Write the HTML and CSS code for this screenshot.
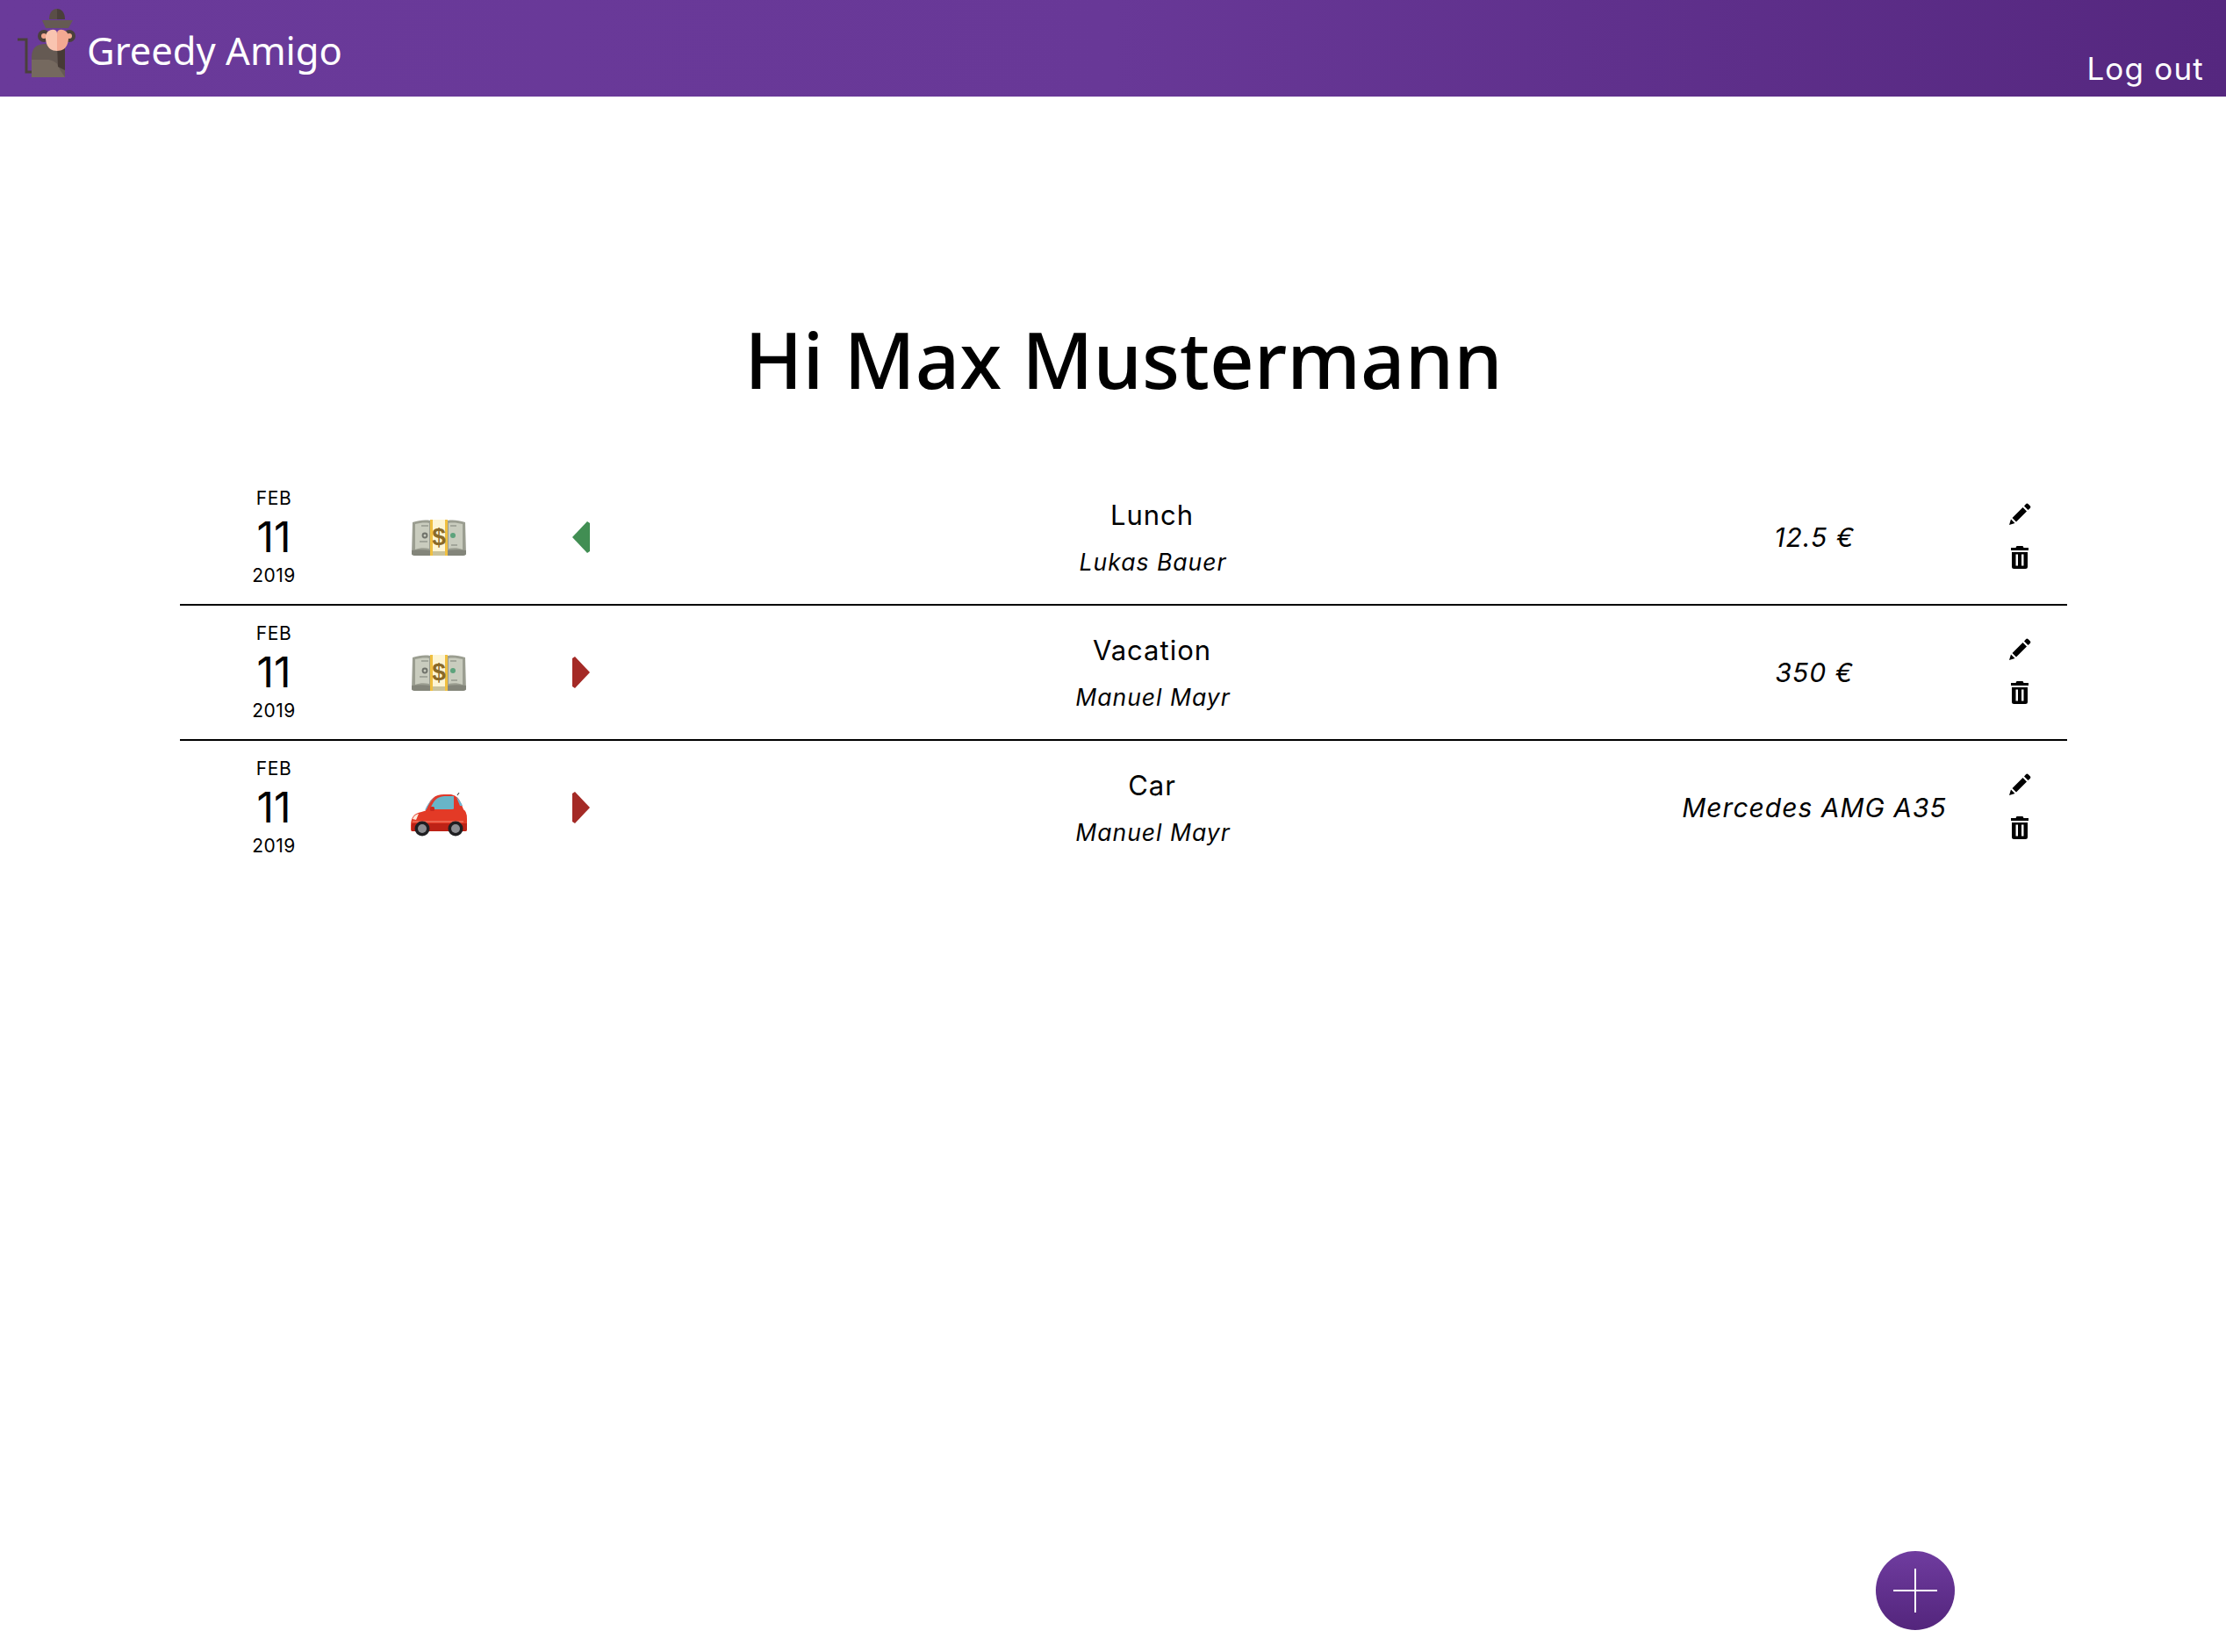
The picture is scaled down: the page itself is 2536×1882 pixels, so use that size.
FILE: index.html
```html
<!DOCTYPE html>
<html lang="en">
<head>
    <meta charset="UTF-8">
    <meta name="viewport" content="width=device-width, initial-scale=1.0">
    <title>Greedy Amigo</title>
    <link rel="stylesheet" href="styles.css">
</head>
<body>
    <svg class="icon-defs" aria-hidden="true">
        <symbol id="icon-money" viewBox="0 0 62 41">
            <path d="M1 3 C8 1 14 0 21 1 V38 C14 37 7 37 0 40 Z" fill="#9b9e91"/>
            <path d="M61 3 C54 1 48 0 41 1 V38 C48 37 55 37 62 40 Z" fill="#9b9e91"/>
            <path d="M0 35 C7 34 14 34 21 35 V41 H3 Q0 41 0 38 Z" fill="#83857a"/>
            <path d="M62 35 C55 34 48 34 41 35 V41 H59 Q62 41 62 38 Z" fill="#83857a"/>
            <path d="M4 5 C9 4 15 3 20 4 V33 C15 32 9 32 4 34 Z" fill="#c9ccbe"/>
            <path d="M58 5 C53 4 47 3 42 4 V33 C47 32 53 32 58 34 Z" fill="#c9ccbe"/>
            <circle cx="15" cy="18" r="3.4" fill="#6f726a"/>
            <circle cx="15" cy="18" r="1.5" fill="#c9ccbe"/>
            <circle cx="47" cy="18" r="3" fill="#5da37c"/>
            <path d="M11 7 H19 M44 7 H51 M9 25 H18 M45 29 H52" stroke="#7d8076" stroke-width="1.2"/>
            <rect x="21" y="0" width="20" height="41" fill="#fdf5d3"/>
            <rect x="21" y="36" width="20" height="5" fill="#c8c29c"/>
            <rect x="21" y="0" width="3" height="41" fill="#f0bf3f"/>
            <rect x="38" y="0" width="3" height="41" fill="#f0bf3f"/>
        </symbol>
        <symbol id="icon-pencil" viewBox="0 0 25 25">
            <path d="M0 25 L2 18.5 L6.5 23 Z M3.5 17 L15.5 5 L20 9.5 L8 21.5 Z M17 3.5 L19 1.2 Q20.2 0 21.5 1 L24 3.5 Q25 4.8 23.8 6 L21.5 8 Z"/>
        </symbol>
        <symbol id="icon-trash" viewBox="0 0 20 26">
            <path d="M6.5 0 H13.5 L14.5 2 H20 V5 H0 V2 H5.5 Z"/>
            <path fill-rule="evenodd" d="M1 7 H19 V23.5 Q19 26 16.5 26 H3.5 Q1 26 1 23.5 Z M5.5 9.5 V22.5 H8 V9.5 Z M12 9.5 V22.5 H14.5 V9.5 Z"/>
        </symbol>
    </svg>

    <div class="navbar">
        <div class="brand">
            <svg class="brand-logo" viewBox="0 0 90 90">
                <path d="M20 45 H30 V82 H37" fill="none" stroke="#4a403c" stroke-width="3"/>
                <path d="M36 88 V65 Q36 50 52 50 H74 V88 Z" fill="#655a53"/>
                <path d="M36 88 V68 H56 Q66 70 68 79 L74 88 Z" fill="#75695f"/>
                <path d="M65 50 H74 V80 L66 76 Z" fill="#463a35"/>
                <circle cx="50" cy="41" r="7" fill="#4a403c"/>
                <circle cx="79" cy="41" r="7" fill="#4a403c"/>
                <circle cx="50" cy="41" r="3" fill="#f2a88f"/>
                <circle cx="79" cy="41" r="3" fill="#f2a88f"/>
                <path d="M65 58 C52 58 52 45 52 42 C52 33 65 31 65 38 Z" fill="#f9c4b0"/>
                <path d="M65 58 C78 58 78 45 78 42 C78 33 65 31 65 38 Z" fill="#f3a992"/>
                <path d="M48 23 H83 L78 32 H52 Z" fill="#655a53"/>
                <path d="M56 22 C56 14 60 10 65 10 V22 Z" fill="#5a4e47"/>
                <path d="M74 22 C74 14 70 10 65 10 V22 Z" fill="#4a3f3a"/>
            </svg>
            <span class="brand-name">Greedy Amigo</span>
        </div>
        <a class="logout">Log out</a>
    </div>

    <div class="main-content">
        <h1 class="greeting">Hi Max Mustermann</h1>

        <div class="entries">
            <div class="entry">
                <div class="entry-date">
                    <span class="date-small">FEB</span>
                    <span class="date-day">11</span>
                    <span class="date-small">2019</span>
                </div>
                <svg class="entry-emoji" viewBox="0 0 62 41">
                    <use href="#icon-money" width="62" height="41"/>
                    <text x="31" y="29" class="money-sign">$</text>
                </svg>
                <div class="entry-direction"><div class="arrow arrow-in"></div></div>
                <div class="entry-info">
                    <span class="entry-title">Lunch</span>
                    <span class="entry-person">Lukas Bauer</span>
                </div>
                <div class="entry-value">12.5 €</div>
                <div class="entry-actions">
                    <svg class="action-pencil"><use href="#icon-pencil"/></svg>
                    <svg class="action-trash"><use href="#icon-trash"/></svg>
                </div>
            </div>

            <div class="entry">
                <div class="entry-date">
                    <span class="date-small">FEB</span>
                    <span class="date-day">11</span>
                    <span class="date-small">2019</span>
                </div>
                <svg class="entry-emoji" viewBox="0 0 62 41">
                    <use href="#icon-money" width="62" height="41"/>
                    <text x="31" y="29" class="money-sign">$</text>
                </svg>
                <div class="entry-direction"><div class="arrow arrow-out"></div></div>
                <div class="entry-info">
                    <span class="entry-title">Vacation</span>
                    <span class="entry-person">Manuel Mayr</span>
                </div>
                <div class="entry-value">350 €</div>
                <div class="entry-actions">
                    <svg class="action-pencil"><use href="#icon-pencil"/></svg>
                    <svg class="action-trash"><use href="#icon-trash"/></svg>
                </div>
            </div>

            <div class="entry">
                <div class="entry-date">
                    <span class="date-small">FEB</span>
                    <span class="date-day">11</span>
                    <span class="date-small">2019</span>
                </div>
                <svg class="entry-emoji entry-emoji-car" viewBox="0 0 64 50">
                    <path d="M53 3 L55 0" stroke="#555" stroke-width="1.2"/>
                    <path d="M17 20 C22 7 27 2 38 2 H46 Q54 3 58 14 L62 24 H16 Z" fill="#e0392a"/>
                    <path d="M22 19 C26 8 30 5 38 4 H49 V18 Q49 19 47 19 Z" fill="#68b5c8"/>
                    <path d="M18 19 C21 12 24 8 28 5 C24 7 19 13 16 20 Z M52 5 Q56 8 59 15 L56 15 Z" fill="#6fb4d0"/>
                    <path d="M0 38 C0 27 4 24 12 22 L22 19 H59 Q64 20 64 30 V42 Q64 44 62 44 H2 Q0 44 0 42 Z" fill="#e33a26"/>
                    <path d="M1 35 H64 V42 Q64 44 62 44 H2 Q0 44 1 42 Z" fill="#bd2216"/>
                    <path d="M2 33 H60" stroke="#f58e78" stroke-width="1"/>
                    <rect x="22" y="16" width="5" height="5" rx="1.5" fill="#c9281b"/>
                    <path d="M2 30 Q4 25 9 24 L6 31 Z" fill="#fde9dc"/>
                    <circle cx="13" cy="41" r="8.5" fill="#1f1f22"/>
                    <circle cx="13" cy="41" r="5" fill="#8d8e92"/>
                    <circle cx="51" cy="41" r="8.5" fill="#1f1f22"/>
                    <circle cx="51" cy="41" r="5" fill="#8d8e92"/>
                </svg>
                <div class="entry-direction"><div class="arrow arrow-out"></div></div>
                <div class="entry-info">
                    <span class="entry-title">Car</span>
                    <span class="entry-person">Manuel Mayr</span>
                </div>
                <div class="entry-value">Mercedes AMG A35</div>
                <div class="entry-actions">
                    <svg class="action-pencil"><use href="#icon-pencil"/></svg>
                    <svg class="action-trash"><use href="#icon-trash"/></svg>
                </div>
            </div>
        </div>
    </div>

    <button class="fab" aria-label="Add"></button>
</body>
</html>
```

FILE: styles.css
```css
* {
    margin: 0;
    padding: 0;
    box-sizing: border-box;
}

body {
    font-family: "Inter", "Liberation Sans", sans-serif;
    background: #ffffff;
    color: #000000;
    min-height: 100vh;
}

.icon-defs {
    position: absolute;
    width: 0;
    height: 0;
}

.money-sign {
    font-family: "Liberation Sans", sans-serif;
    font-size: 28px;
    font-weight: 700;
    text-anchor: middle;
    fill: #8a6a28;
}

.navbar {
    height: 110px;
    display: flex;
    justify-content: space-between;
    padding: 0 25px 0 0;
    background: linear-gradient(90deg, #6a3a9a 0%, #683897 50%, #55277f 100%);
    color: #ffffff;
}

.brand {
    display: flex;
    align-items: center;
}

.brand-logo {
    width: 90px;
    height: 90px;
    align-self: flex-start;
}

.brand-name {
    font-family: "Noto Sans", sans-serif;
    font-size: 43.5px;
    margin-left: 9px;
    margin-top: 3px;
}

.logout {
    align-self: flex-end;
    font-size: 35px;
    line-height: 40px;
    margin-bottom: 12px;
    letter-spacing: 1.2px;
}

.main-content {
    display: flex;
    flex-direction: column;
}

.greeting {
    font-family: "Noto Sans", sans-serif;
    font-size: 88.5px;
    font-weight: 500;
    line-height: 128px;
    text-align: center;
    margin-top: 235px;
    margin-bottom: 63px;
    padding-left: 24px;
}

.entries {
    margin: 0 181px 0 205px;
}

.entry {
    display: grid;
    grid-template-columns: 214px 162px 162px 1139px 370px 98px;
    align-items: center;
    justify-items: center;
    height: 154px;
    border-bottom: 2px solid #000000;
}

.entry:last-child {
    border-bottom-color: transparent;
}

.entry-date {
    display: flex;
    flex-direction: column;
    align-items: center;
}

.date-small {
    font-size: 21px;
    line-height: 24px;
    letter-spacing: 0.5px;
}

.date-day {
    font-size: 48px;
    line-height: 64px;
}

.entry-emoji {
    width: 62px;
    height: 41px;
}

.entry-emoji-car {
    width: 64px;
    height: 50px;
    margin-top: 16px;
}

.arrow {
    width: 20px;
    height: 36px;
    background: #a42a26;
    clip-path: polygon(0 2px, 3px 0, 100% 50%, 3px 100%, 0 calc(100% - 2px));
}

.arrow-in {
    background: #418e53;
    clip-path: polygon(100% 2px, calc(100% - 3px) 0, 0 50%, calc(100% - 3px) 100%, 100% calc(100% - 2px));
}

.entry-info {
    display: flex;
    flex-direction: column;
    align-items: center;
    gap: 19px;
    padding-top: 2px;
}

.entry-title {
    font-size: 31px;
    line-height: 34px;
    letter-spacing: 1px;
}

.entry-person {
    font-size: 26.5px;
    line-height: 34px;
    font-style: italic;
    letter-spacing: 1px;
    margin-left: 2px;
}

.entry-value {
    font-size: 30px;
    font-style: italic;
    letter-spacing: 1px;
    white-space: nowrap;
}

.entry-actions {
    display: flex;
    flex-direction: column;
    align-items: center;
    gap: 24px;
    margin-bottom: 3px;
}

.action-pencil {
    width: 25px;
    height: 25px;
}

.action-trash {
    width: 20px;
    height: 26px;
}

.fab {
    position: fixed;
    right: 309px;
    bottom: 25px;
    width: 90px;
    height: 90px;
    border: none;
    border-radius: 50%;
    background: linear-gradient(180deg, #6f3c9f 0%, #53257c 100%);
}

.fab::before,
.fab::after {
    content: "";
    position: absolute;
    background: #ffffff;
}

.fab::before {
    left: 20px;
    top: 44px;
    width: 50px;
    height: 2px;
}

.fab::after {
    left: 44px;
    top: 20px;
    width: 2px;
    height: 50px;
}
```
